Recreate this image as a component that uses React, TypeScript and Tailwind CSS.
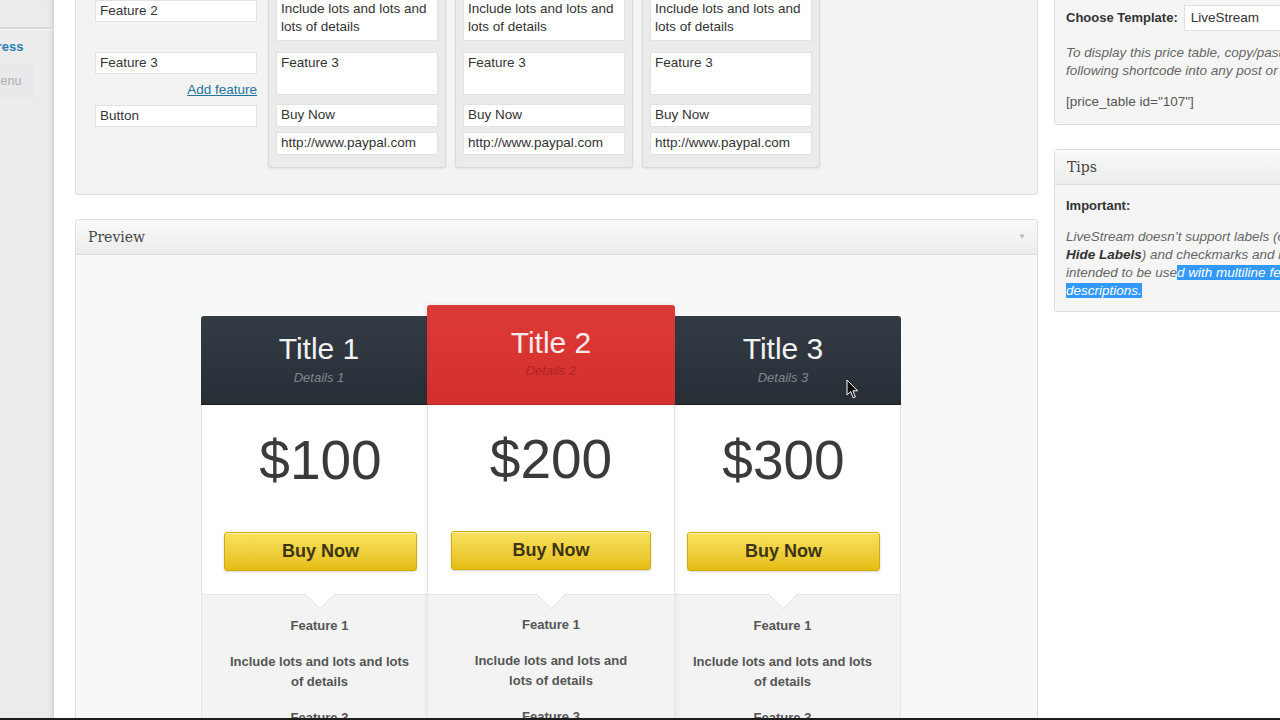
import type { ReactNode } from 'react'

type Plan = {
  title: string
  details: string
  price: string
  featured?: boolean
}

const plans: Plan[] = [
  { title: 'Title 1', details: 'Details 1', price: '$100' },
  { title: 'Title 2', details: 'Details 2', price: '$200', featured: true },
  { title: 'Title 3', details: 'Details 3', price: '$300' },
]

const features = [
  'Feature 1',
  'Include lots and lots and lots of details',
  'Feature 3',
  'Feature 4',
]

function Field({ className = '', children }: { className?: string; children: ReactNode }) {
  return (
    <div
      className={`bg-white border border-[#e2e2e2] pl-[4px] text-[13.5px] text-[#333] overflow-hidden ${className}`}
    >
      {children}
    </div>
  )
}

function Sidebar() {
  return (
    <aside className="w-[54px] shrink-0 bg-[#ececec] border-r border-[#d6d6d6] shadow-[inset_-5px_0_5px_-3px_rgba(0,0,0,0.08)] overflow-hidden">
      <div className="h-[27px]" />
      <div className="h-[3px] bg-[#d9d9d9] border-b border-[#f7f7f7]" />
      <div className="h-[34px] flex items-center">
        <span className="-ml-[45px] whitespace-nowrap text-[13px] font-bold text-[#2a7db0]">
          WordPress
        </span>
      </div>
      <div className="h-[34px] w-[34px] bg-[#e9e9eb] flex items-center">
        <span className="-ml-[62px] whitespace-nowrap text-[12.5px] text-[#adadad]">
          Collapse menu
        </span>
      </div>
    </aside>
  )
}

// column editor: texts for one price column
function ColumnEditor() {
  return (
    <div className="w-[178px] h-[176px] -mt-[8px] bg-[#ebebeb] border border-[#d9d9d9] rounded-b-[3px] shadow-[0_1px_2px_rgba(0,0,0,0.08)] px-[7px] pt-[3px]">
      <Field className="h-[45px] pt-[3px] leading-[18px]">
        Include lots and lots and lots of details
      </Field>
      <Field className="mt-[11px] h-[43px] pt-[1px] leading-[18px]">Feature 3</Field>
      <Field className="mt-[9px] h-[23px] flex items-center">Buy Now</Field>
      <Field className="mt-[5px] h-[23px] flex items-center whitespace-nowrap">
        http://www.paypal.com
      </Field>
    </div>
  )
}

function EditorPanel() {
  return (
    <section className="h-[195px] bg-[#f3f3f3] border-x border-b border-[#dfdfdf] rounded-b-[3px] pl-[19px] flex gap-[11px]">
      <div className="w-[162px]">
        <Field className="h-[22px] flex items-center">Feature 2</Field>
        <Field className="mt-[30px] h-[22px] flex items-center">Feature 3</Field>
        <div className="mt-[8px] h-[16px] leading-[16px] text-right text-[13.5px] text-[#21759b] underline">
          Add feature
        </div>
        <Field className="mt-[7px] h-[22px] flex items-center">Button</Field>
      </div>
      <div className="flex gap-[9px]">
        <ColumnEditor />
        <ColumnEditor />
        <ColumnEditor />
      </div>
    </section>
  )
}

function BuyButton() {
  return (
    <div className="h-[39px] flex items-center justify-center rounded-[3px] border border-[#d3ab08] bg-gradient-to-b from-[#f8e35c] to-[#e5bd0d] shadow-[inset_0_1px_0_rgba(255,255,255,0.45),0_1px_2px_rgba(0,0,0,0.18)] text-[18px] font-bold text-[#3d3412]">
      Buy Now
    </div>
  )
}

function PriceColumn({ plan, side }: { plan: Plan; side: 'left' | 'right' | 'mid' }) {
  const f = plan.featured
  const edge = side === 'left' ? 'border-l' : side === 'right' ? 'border-r' : 'border-x'

  return (
    <div
      className={
        f
          ? 'relative z-10 -mx-[10px] -mt-[11px] w-[248px] shrink-0 shadow-[0_0_6px_rgba(0,0,0,0.08)]'
          : 'w-[236px] shrink-0'
      }
    >
      {/* header */}
      {f ? (
        <div className="h-[100px] rounded-t-[3px] bg-gradient-to-b from-[#dc3a37] to-[#d42f2d] border-b border-[#b82624] pt-[21px] text-center">
          <div className="text-[30px] leading-[34px] text-[#fbeaea]">{plan.title}</div>
          <div className="mt-[3px] text-[13px] italic leading-[16px] text-[#ad2424]">
            {plan.details}
          </div>
        </div>
      ) : (
        <div className="h-[89px] rounded-t-[3px] bg-gradient-to-b from-[#333b45] to-[#272e36] border-b border-[#1a1f25] pt-[16px] text-center">
          <div className="text-[30px] leading-[34px] text-[#f2f2f2]">{plan.title}</div>
          <div className="mt-[4px] text-[13px] italic leading-[16px] text-[#80868e]">
            {plan.details}
          </div>
        </div>
      )}

      {/* price */}
      <div
        className={`h-[189px] bg-white ${edge} border-[#e2e2e2] ${
          f ? 'px-[23px] pt-[27px]' : 'pl-[22px] pr-[20px] pt-[28px]'
        }`}
      >
        <div className="text-center text-[55px] leading-[55px] text-[#3a3a3a]">{plan.price}</div>
        <div className="mt-[44px]">
          <BuyButton />
        </div>
      </div>

      {/* features */}
      <div
        className={`relative h-[200px] bg-[#f3f3f3] ${edge} border-t border-[#e6e6e6] text-center text-[13px] font-bold leading-[20px] text-[#555] ${
          f ? 'px-[41px] pt-[20px]' : 'px-[24px] pt-[21px]'
        }`}
      >
        <div className="absolute left-1/2 top-[-12px] -ml-[11px] w-[22px] h-[22px] rotate-45 bg-white border-r border-b border-[#e6e6e6]" />
        <div className="flex flex-col gap-[16px]">
          {features.map((t) => (
            <div key={t}>{t}</div>
          ))}
        </div>
      </div>
    </div>
  )
}

function PreviewPanel() {
  return (
    <section className="mt-[24px] border border-[#dfdfdf] rounded-t-[3px] overflow-hidden">
      <div className="h-[35px] flex items-center justify-between px-[12px] border-b border-[#dcdcdc] bg-gradient-to-b from-[#fafafa] to-[#ececec]">
        <span className="font-['DejaVu_Serif',Georgia,serif] text-[14px] text-[#464646]">Preview</span>
        <span className="mr-[-1px] text-[8px] text-[#bcbcbc]">▼</span>
      </div>
      <div className="h-[500px] bg-[#f8f8f8] pt-[61px] pl-[125px]">
        <div className="flex items-start">
          <PriceColumn plan={plans[0]} side="left" />
          <div className="w-[228px] shrink-0 flex">
            <PriceColumn plan={plans[1]} side="mid" />
          </div>
          <PriceColumn plan={plans[2]} side="right" />
        </div>
      </div>
    </section>
  )
}

function SidePanels() {
  return (
    <div className="w-[290px] shrink-0">
      <section className="h-[125px] bg-[#f5f5f5] border-x border-b border-[#dfdfdf] rounded-b-[3px] pl-[11px] text-[13px]">
        <div className="pt-[5px] h-[31px] flex items-center gap-[6px]">
          <span className="font-bold text-[#333]">Choose Template:</span>
          <div className="h-[26px] w-[110px] bg-white border border-[#e0e0e0] pl-[6px] flex items-center text-[13.5px] text-[#333]">
            LiveStream
          </div>
        </div>
        <p className="mt-[13px] leading-[18px] text-[13.5px] italic text-[#666] whitespace-nowrap">
          To display this price table, copy/paste the
          <br />
          following shortcode into any post or page.
        </p>
        <p className="mt-[13px] leading-[18px] text-[13.5px] text-[#555]">[price_table id="107"]</p>
      </section>

      <section className="mt-[24px] h-[163px] bg-[#f5f5f5] border border-[#dfdfdf] rounded-[3px] text-[13px]">
        <div className="h-[35px] flex items-center pl-[12px] pt-[1px] border-b border-[#dcdcdc] bg-gradient-to-b from-[#fafafa] to-[#ececec]">
          <span className="font-['DejaVu_Serif',Georgia,serif] text-[14px] text-[#464646]">Tips</span>
        </div>
        <div className="pl-[11px] pt-[12px]">
          <div className="leading-[18px] font-bold text-[#333]">Important:</div>
          <p className="mt-[13px] leading-[18px] text-[13.5px] italic text-[#666] whitespace-nowrap">
            LiveStream doesn’t support labels (check
            <br />
            <b className="text-[#333]">Hide Labels</b>) and checkmarks and is
            <br />
            intended to be use
            <span className="bg-[#3399ff] text-white">d with multiline feature</span>
            <br />
            <span className="bg-[#3399ff] text-white">descriptions.</span>
          </p>
        </div>
      </section>
    </div>
  )
}

function Pointer() {
  return (
    <svg
      className="absolute left-[846px] top-[379px]"
      width="13"
      height="21"
      viewBox="0 0 13 21"
    >
      <path
        d="M1 1 L1 16 L4.6 12.6 L7.2 18.8 L9.4 17.9 L6.9 11.8 L11.6 11.8 Z"
        fill="#111"
        stroke="#fff"
        strokeWidth="1"
        strokeLinejoin="round"
      />
    </svg>
  )
}

export default function App() {
  return (
    <div className="relative w-[1280px] h-[720px] overflow-hidden bg-white flex flex-col font-['Liberation_Sans',Arial,sans-serif]">
      <div className="flex h-[718px] overflow-hidden">
        <Sidebar />
        <main className="flex gap-[16px] pl-[21px]">
          <div className="w-[963px] shrink-0">
            <EditorPanel />
            <PreviewPanel />
          </div>
          <SidePanels />
        </main>
      </div>
      <div className="h-[2px] bg-[#1c1c1c]" />
      <Pointer />
    </div>
  )
}
